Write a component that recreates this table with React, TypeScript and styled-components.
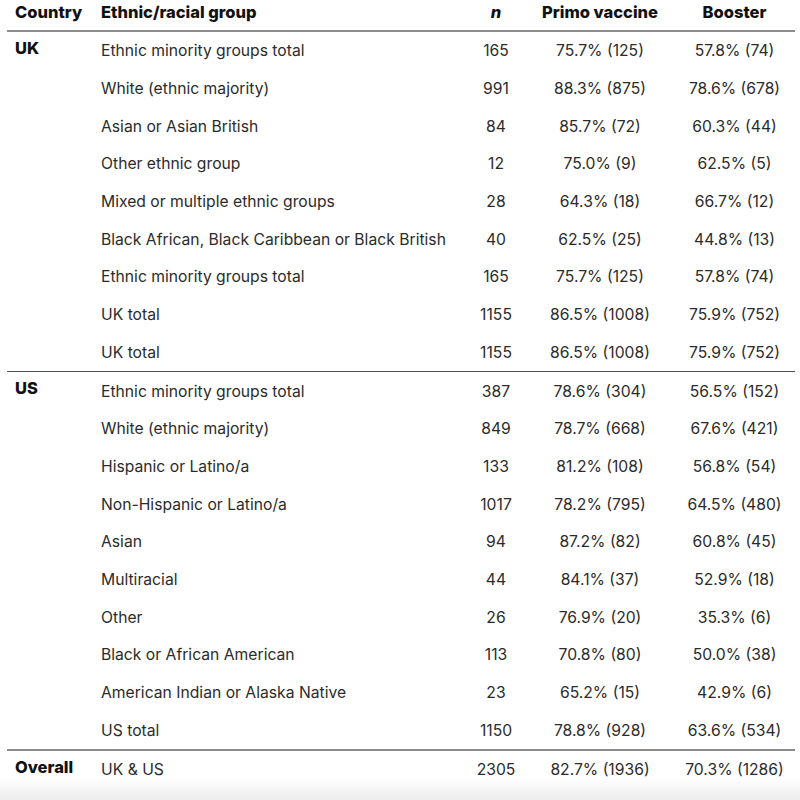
import React from "react";
import styled, { createGlobalStyle } from "styled-components";

const Global = createGlobalStyle`
  html, body { margin: 0; padding: 0; }
  body {
    font-family: Inter, "Liberation Sans", sans-serif;
    background: linear-gradient(to bottom, #ffffff 0px, #ffffff 778px, #ececec 800px);
    min-height: 800px;
    color: #2b2b2b;
  }
`;

const COLS = "86px 357px 92px 116px 137px";

const Table = styled.div`
  width: 788px;
  margin-left: 7px;
`;

const HeaderRow = styled.div`
  display: grid;
  grid-template-columns: ${COLS};
  align-items: center;
  border-bottom: 2px solid #8c8c8c;
  padding-bottom: 6px;
  height: 24px;
`;

const HeadCell = styled.div<{ $align?: "left" | "center"; $shift?: number }>`
  font-weight: 800;
  font-size: 16.5px;
  color: #111;
  text-align: ${(p) => p.$align ?? "center"};
  padding-left: ${(p) => p.$shift ?? 0}px;
  white-space: nowrap;
`;

const Section = styled.div<{ $border?: "thin" | "thick" | "none" }>`
  display: grid;
  grid-template-columns: ${COLS};
  grid-auto-rows: 37.7px;
  border-bottom: ${(p) =>
    p.$border === "thin" ? "1px solid #555" : p.$border === "thick" ? "2px solid #8c8c8c" : "none"};
`;

const CountryCell = styled.div<{ $rows: number }>`
  grid-row: 1 / span ${(p) => p.$rows};
  grid-column: 1;
  font-weight: 800;
  font-size: 16.5px;
  color: #111;
  padding: 6px 0 0 8px;
`;

const Cell = styled.div<{ $col: number; $align?: "left" | "center"; $shift?: number }>`
  grid-column: ${(p) => p.$col};
  display: flex;
  align-items: center;
  justify-content: ${(p) => (p.$align === "left" ? "flex-start" : "center")};
  padding-left: ${(p) => p.$shift ?? 0}px;
  font-size: 15.7px;
  font-variant-numeric: proportional-nums;
  white-space: nowrap;
`;

type Row = [string, string, string, string];

const uk: Row[] = [
  ["Ethnic minority groups total", "165", "75.7% (125)", "57.8% (74)"],
  ["White (ethnic majority)", "991", "88.3% (875)", "78.6% (678)"],
  ["Asian or Asian British", "84", "85.7% (72)", "60.3% (44)"],
  ["Other ethnic group", "12", "75.0% (9)", "62.5% (5)"],
  ["Mixed or multiple ethnic groups", "28", "64.3% (18)", "66.7% (12)"],
  ["Black African, Black Caribbean or Black British", "40", "62.5% (25)", "44.8% (13)"],
  ["Ethnic minority groups total", "165", "75.7% (125)", "57.8% (74)"],
  ["UK total", "1155", "86.5% (1008)", "75.9% (752)"],
  ["UK total", "1155", "86.5% (1008)", "75.9% (752)"],
];

const us: Row[] = [
  ["Ethnic minority groups total", "387", "78.6% (304)", "56.5% (152)"],
  ["White (ethnic majority)", "849", "78.7% (668)", "67.6% (421)"],
  ["Hispanic or Latino/a", "133", "81.2% (108)", "56.8% (54)"],
  ["Non-Hispanic or Latino/a", "1017", "78.2% (795)", "64.5% (480)"],
  ["Asian", "94", "87.2% (82)", "60.8% (45)"],
  ["Multiracial", "44", "84.1% (37)", "52.9% (18)"],
  ["Other", "26", "76.9% (20)", "35.3% (6)"],
  ["Black or African American", "113", "70.8% (80)", "50.0% (38)"],
  ["American Indian or Alaska Native", "23", "65.2% (15)", "42.9% (6)"],
  ["US total", "1150", "78.8% (928)", "63.6% (534)"],
];

const overall: Row[] = [["UK & US", "2305", "82.7% (1936)", "70.3% (1286)"]];

function Rows({ rows }: { rows: Row[] }) {
  return (
    <>
      {rows.map((r, i) => (
        <React.Fragment key={i}>
          <Cell $col={2} $align="left" $shift={8}>{r[0]}</Cell>
          <Cell $col={3}>{r[1]}</Cell>
          <Cell $col={4}>{r[2]}</Cell>
          <Cell $col={5} $shift={16}>{r[3]}</Cell>
        </React.Fragment>
      ))}
    </>
  );
}

export default function App() {
  return (
    <>
      <Global />
      <Table>
        <HeaderRow>
          <HeadCell $align="left" $shift={8}>Country</HeadCell>
          <HeadCell $align="left" $shift={8}>Ethnic/racial group</HeadCell>
          <HeadCell><i>n</i></HeadCell>
          <HeadCell>Primo vaccine</HeadCell>
          <HeadCell $shift={16}>Booster</HeadCell>
        </HeaderRow>
        <Section $border="thin">
          <CountryCell $rows={uk.length}>UK</CountryCell>
          <Rows rows={uk} />
        </Section>
        <Section $border="thick">
          <CountryCell $rows={us.length}>US</CountryCell>
          <Rows rows={us} />
        </Section>
        <Section>
          <CountryCell $rows={1}>Overall</CountryCell>
          <Rows rows={overall} />
        </Section>
      </Table>
    </>
  );
}
